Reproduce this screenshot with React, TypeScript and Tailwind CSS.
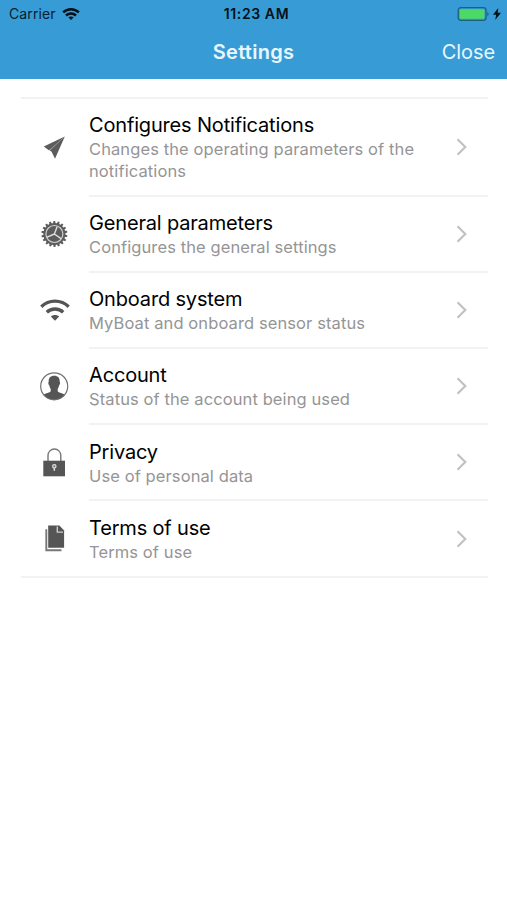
import React from "react";

const GEAR_TEETH = Array.from({ length: 18 }, (_, i) => i * 20);

const PlaneIcon = () => (
    <svg width="32" height="32" viewBox="0 0 32 32" fill="#5c5c5c">
        <path d="M26.8 4.6 5.8 14.6l5 3.6z" />
        <path d="M26.8 4.6 12 18.6l1.6 1.2 3.4 7z" />
        <path d="M26.8 4.6 10.6 17.2l1.6 1.9z" fillOpacity=".6" />
    </svg>
);

const GearIcon = () => (
    <svg width="32" height="32" viewBox="0 0 32 32" fill="#5c5c5c">
        {GEAR_TEETH.map((angle) => (
            <path key={angle} d="M14.9 6.5 15.4 3h1.8l.5 3.5z" transform={`rotate(${angle} 16.4 16)`} />
        ))}
        <circle cx="16.4" cy="16" r="11" />
        <circle cx="16.4" cy="16" r="8.5" fill="none" stroke="#d0d0d0" strokeWidth="1.2" />
        <path
            d="M16.4 16l2.8-7.6M16.4 16l-7.8 3.4M16.4 16l6.6 4.6"
            fill="none"
            stroke="#dedede"
            strokeWidth="1.4"
        />
    </svg>
);

const WifiIcon = () => (
    <svg width="32" height="32" viewBox="0 0 32 32" fill="none" stroke="#555" strokeWidth="3.3">
        <path d="M3.3 12.7c7.6-7.4 19.8-7.4 27.4 0" />
        <path d="M8.8 18.3c4.6-4.4 11.8-4.4 16.4 0" />
        <path d="M12.8 22.6c2.5-2 5.9-2 8.4 0L17 26.8z" fill="#555" stroke="none" />
    </svg>
);

const AccountIcon = () => (
    <svg width="32" height="32" viewBox="0 0 32 32">
        <path
            d="M16.2 5.8c-3.900 0-5.700 2.200-5.500 6-.8.5-.3 3.200.6 3.500.2 1.500.7 2.700 1.400 3.600v2.300c-.7 1.500-4.800 1.600-7.300 3.800 2.700 3.200 6.600 4.900 10.800 4.900s8.100-1.700 10.800-4.900c-2.500-2.200-6.600-2.300-7.300-3.800v-2.300c.7-.9 1.200-2.100 1.400-3.600.9-.3 1.400-3 .6-3.500.2-3.800-1.600-6-5.500-6z"
            fill="#555"
        />
        <circle cx="16.2" cy="16.3" r="13.5" fill="none" stroke="#707070" strokeWidth="1.2" />
    </svg>
);

const LockIcon = () => (
    <svg width="32" height="32" viewBox="0 0 32 32">
        <path d="M10 15V9.400a6.400 6.400 0 0 1 12.800 0V15" fill="none" stroke="#777" strokeWidth="1.4" />
        <path d="M5.300 14.700h21.700v15.600H5.300z" fill="#555" />
        <circle cx="16.3" cy="20.3" r="1.7" fill="#777" stroke="#ddd" strokeWidth="1.2" />
        <path d="M16.300 21.800v3" stroke="#ddd" strokeWidth="1.5" />
    </svg>
);

const DocsIcon = () => (
    <svg width="32" height="32" viewBox="0 0 32 32">
        <path d="M8.300 7.200v21h15.200" fill="none" stroke="#777" strokeWidth="1.9" />
        <path d="M10.200 3.400h11.200l4.700 5v17.300H10.200z" fill="#555" />
        <path d="M19.300 4.600v5.500h5.700" fill="none" stroke="#ccc" strokeWidth="1.4" />
    </svg>
);

const ITEMS = [
    { title: "Configures Notifications", text: "Changes the operating parameters of the notifications", Icon: PlaneIcon },
    { title: "General parameters", text: "Configures the general settings", Icon: GearIcon },
    { title: "Onboard system", text: "MyBoat and onboard sensor status", Icon: WifiIcon },
    { title: "Account", text: "Status of the account being used", Icon: AccountIcon },
    { title: "Privacy", text: "Use of personal data", Icon: LockIcon },
    { title: "Terms of use", text: "Terms of use", Icon: DocsIcon },
];

const StatusBar = () => (
    <div className="grid h-[27px] grid-cols-3 items-center pl-[9px] pr-1.5 text-[14px] text-[#08202e]">
        <div className="flex items-center gap-[6px]">
            <span className="tracking-[0.1px]">Carrier</span>
            <svg width="18" height="14" viewBox="0 0 18 14" fill="none" stroke="#061018" strokeWidth="2.5">
                <path d="M1.200 5.300c4.300-4.200 11.300-4.200 15.600 0" />
                <path d="M4 8.500c2.800-2.700 7.200-2.700 10 0" />
                <path d="M6.300 10.300c1.600-1.200 3.800-1.200 5.400 0L9 13z" fill="#061018" stroke="none" />
            </svg>
        </div>
        <span className="whitespace-nowrap pl-[3px] text-center font-semibold tracking-[0.6px] text-[#061018]">11:23 AM</span>
        <div className="flex items-center justify-end gap-1">
            <svg width="32" height="14" viewBox="0 0 32 14">
                <rect x="1.2" y=".7" width="27.8" height="12.6" rx="2.5" fill="none" stroke="#1f607f" strokeWidth="1.3" />
                <rect x="2.8" y="2.3" width="24.6" height="9.4" rx="1" fill="#4cd964" />
                <path d="M30.300 5c1.700.4 1.700 3.600 0 4z" fill="#1f607f" />
            </svg>
            <svg width="8" height="12" viewBox="0 0 8 12" fill="#061018">
                <path d="M5.300 0 0 6.700h3.200L2.200 12 8 4.800H4.700z" />
            </svg>
        </div>
    </div>
);

export default function App() {
    return (
        <div className="h-[900px] w-full bg-white font-['Inter',sans-serif]">
            <header className="h-[79px] bg-[#379cd5]">
                <StatusBar />
                <div className="grid h-[50px] grid-cols-3 items-center px-3 text-[20px] text-[#e8f7ff]">
                    <h1 className="col-start-2 text-center font-semibold tracking-[0.25px]">Settings</h1>
                    <button className="text-right tracking-[-0.1px]">Close</button>
                </div>
            </header>

            <ul className="ml-[21px] mr-[19px] mt-[18px] border-y-2 border-[#f1f2f2]">
                {ITEMS.map(({ title, text, Icon }, i) => (
                    <li key={title} className="flex items-center">
                        <div className={`ml-[17px] mr-[19px] shrink-0 ${i === 0 ? "" : "pb-[2px]"}`}>
                            <Icon />
                        </div>
                        <div
                            className={`flex grow items-center justify-between pr-[21px] ${i === 0 ? "h-[97.5px]" : i < ITEMS.length - 1 ? "h-[76.2px]" : "h-[75px]"} ${i < ITEMS.length - 1 ? "border-b-2 border-[#f1f2f2]" : ""}`}
                        >
                            <div className={`w-[345px] ${i < ITEMS.length - 1 ? "pt-px" : ""}`}>
                                <h2 className="text-[20px] leading-[26px] tracking-[-0.17px] text-black">{title}</h2>
                                <p className="text-[16.5px] leading-[22px] tracking-[0.1px] text-[#959595]">{text}</p>
                            </div>
                            <svg width="11" height="18" viewBox="0 0 11 18" fill="none" stroke="#c2c2c4" strokeWidth="2.2">
                                <path d="m1.500 1.200 7.800 7.800-7.800 7.800" />
                            </svg>
                        </div>
                    </li>
                ))}
            </ul>
        </div>
    );
}
